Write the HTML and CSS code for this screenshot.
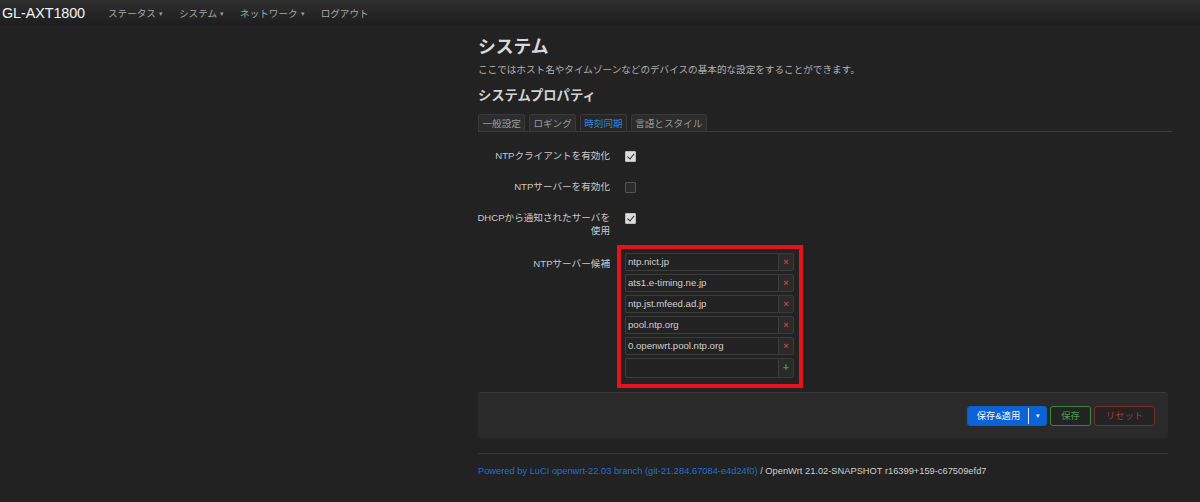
FILE: index.html
```html
<!DOCTYPE html>
<html lang="ja">
<head>
<meta charset="utf-8">
<title>システム - LuCI</title>
<link rel="stylesheet" href="styles.css">
</head>
<body>
<header class="topbar">
  <a class="brand">GL-AXT1800</a>
  <nav class="menu">
    <span class="menu-item">ステータス<span class="caret">▾</span></span>
    <span class="menu-item">システム<span class="caret">▾</span></span>
    <span class="menu-item">ネットワーク<span class="caret">▾</span></span>
    <span class="menu-item">ログアウト</span>
  </nav>
</header>
<main class="main">
  <h2 class="title">システム</h2>
  <p class="desc">ここではホスト名やタイムゾーンなどのデバイスの基本的な設定をすることができます。</p>
  <h3 class="section-title">システムプロパティ</h3>
  <ul class="tabs">
    <li class="tab">一般設定</li>
    <li class="tab">ロギング</li>
    <li class="tab active">時刻同期</li>
    <li class="tab">言語とスタイル</li>
  </ul>
  <div class="form">
    <div class="row">
      <label class="label">NTPクライアントを有効化</label>
      <div class="field"><span class="cb checked"></span></div>
    </div>
    <div class="row">
      <label class="label">NTPサーバーを有効化</label>
      <div class="field"><span class="cb"></span></div>
    </div>
    <div class="row">
      <label class="label">DHCPから通知されたサーバを使用</label>
      <div class="field"><span class="cb checked"></span></div>
    </div>
    <div class="row row-list">
      <label class="label label-list">NTPサーバー候補</label>
      <div class="field">
        <div class="dlist">
          <div class="ditem"><span class="dinput">ntp.nict.jp</span><span class="dbtn del">×</span></div>
          <div class="ditem"><span class="dinput">ats1.e-timing.ne.jp</span><span class="dbtn del">×</span></div>
          <div class="ditem"><span class="dinput">ntp.jst.mfeed.ad.jp</span><span class="dbtn del">×</span></div>
          <div class="ditem"><span class="dinput">pool.ntp.org</span><span class="dbtn del">×</span></div>
          <div class="ditem"><span class="dinput">0.openwrt.pool.ntp.org</span><span class="dbtn del">×</span></div>
          <div class="ditem ditem-new"><span class="dinput"></span><span class="dbtn add">+</span></div>
          <div class="highlight"></div>
        </div>
      </div>
    </div>
  </div>
  <div class="actions">
    <span class="btn btn-apply"><span class="btn-apply-main">保存&amp;適用</span><span class="btn-apply-caret">▾</span></span>
    <span class="btn btn-save">保存</span>
    <span class="btn btn-reset">リセット</span>
  </div>
  <footer class="footer">
    <span class="footer-link">Powered by LuCI openwrt-22.03 branch (git-21.284.67084-e4d24f0)</span> / OpenWrt 21.02-SNAPSHOT r16399+159-c67509efd7
  </footer>
</main>
</body>
</html>
```
FILE: styles.css
```css
html, body {
  margin: 0;
  padding: 0;
}
body {
  background: #222222;
  color: #cccccc;
  font-family: "Liberation Sans", "Noto Sans CJK JP", sans-serif;
  font-size: 9.6px;
  line-height: 13px;
  height: 502px;
  overflow: hidden;
}
.topbar {
  height: 26px;
  background: linear-gradient(#2f2f2f, #1d1d1d);
  display: flex;
  align-items: center;
}
.brand {
  color: #f2f2f2;
  font-size: 14.4px;
  margin-left: 2px;
  width: 106px;
  letter-spacing: -0.1px;
}
.menu {
  display: flex;
  gap: 16px;
}
.menu-item {
  color: #a8a8a8;
  display: flex;
  align-items: center;
}
.caret {
  font-size: 7px;
  margin-left: 3px;
  color: #999;
}
.main {
  width: 694px;
  margin-left: 478px;
  padding-top: 11px;
}
.title {
  font-size: 17.8px;
  line-height: 21px;
  margin: 0;
  font-weight: bold;
  color: #d8d8d8;
}
.desc {
  margin: 5px 0 0;
  color: #b0b0b0;
}
.section-title {
  font-size: 13.3px;
  line-height: 16px;
  margin: 12px 0 0;
  font-weight: bold;
  color: #d2d2d2;
}
.tabs {
  list-style: none;
  margin: 10px 0 0;
  padding: 0;
  display: flex;
  gap: 3.5px;
  border-bottom: 1px solid #3a3a3a;
}
.tab {
  height: 16px;
  line-height: 17px;
  padding: 0 3.5px;
  background: #2c2c2c;
  border: 1px solid #393939;
  border-bottom: none;
  border-radius: 3px 3px 0 0;
  color: #9a9a9a;
}
.tab.active {
  color: #2f83de;
  background: #262626;
}
.form {
  padding-top: 17px;
  margin-left: -6px;
}
.row {
  display: flex;
  gap: 15px;
  margin-bottom: 18px;
  align-items: flex-start;
}
.label {
  width: 138px;
  text-align: right;
  color: #c8c8c8;
}
.field {
  display: flex;
  align-items: center;
  min-height: 13px;
}
.cb {
  width: 9px;
  height: 9px;
  border: 1px solid #555;
  background: #2b2b2b;
  border-radius: 1px;
  position: relative;
  margin-top: 1px;
}
.cb.checked {
  background: #dcdcdc;
  border-color: #bdbdbd;
}
.cb.checked::after {
  content: "";
  position: absolute;
  left: 3px;
  top: 0.5px;
  width: 2.5px;
  height: 5.5px;
  border: solid #333;
  border-width: 0 1.6px 1.6px 0;
  transform: rotate(40deg);
}
.row-list {
  margin-top: -2px;
  margin-bottom: 0;
}
.label-list {
  padding-top: 3.5px;
}
.dlist {
  position: relative;
  display: flex;
  flex-direction: column;
  gap: 3px;
}
.ditem {
  display: flex;
  height: 18px;
}
.ditem-new {
  height: 20px;
}
.dinput {
  width: 150px;
  border: 1px solid #3c3c3c;
  border-right: none;
  border-radius: 2px 0 0 2px;
  background: #222;
  color: #d0d0d0;
  padding-left: 2px;
  line-height: 16px;
}
.ditem-new .dinput {
  line-height: 18px;
}
.dbtn {
  width: 14px;
  border: 1px solid #3c3c3c;
  border-radius: 0 2px 2px 0;
  background: #2a2a2a;
  text-align: center;
  font-weight: bold;
  line-height: 16px;
}
.ditem-new .dbtn {
  line-height: 18px;
}
.del {
  color: #c84040;
  font-size: 9px;
}
.add {
  color: #3e9b3e;
  font-size: 10px;
}
.highlight {
  position: absolute;
  left: -8px;
  top: -8px;
  right: -9px;
  bottom: -10px;
  border: 4px solid #e6131d;
  pointer-events: none;
}
.actions {
  margin-top: 14px;
  width: 690px;
  height: 46px;
  box-sizing: border-box;
  background: #2a2a2a;
  border-top: 1px solid #393939;
  border-radius: 3px;
  display: flex;
  justify-content: flex-end;
  align-items: flex-start;
  gap: 3px;
  padding: 13px 13px 0 0;
}
.btn {
  height: 20px;
  box-sizing: border-box;
  border-radius: 3px;
  line-height: 18px;
  display: flex;
  font-size: 9.3px;
}
.btn-apply {
  background: #0b63d8;
  border: 1px solid #0b5cc8;
  color: #f4f4f4;
}
.btn-apply-main {
  padding: 0 8px 0 9px;
  border-right: 1px solid #e8e8e8;
  margin: 1px 0;
  line-height: 16px;
}
.btn-apply-caret {
  width: 17px;
  text-align: center;
  font-size: 7px;
}
.btn-save {
  border: 1px solid #3c8a3c;
  color: #4f9c4f;
  padding: 0 10px;
  background: #232323;
}
.btn-reset {
  border: 1px solid #7c2e2e;
  color: #a93a3a;
  padding: 0 11px;
  background: #232323;
}
.footer {
  margin-top: 15px;
  width: 690px;
  border-top: 1px solid #363636;
  padding-top: 11px;
  color: #cfcfcf;
  font-size: 9.3px;
}
.footer-link {
  color: #1f6fd3;
}
```
